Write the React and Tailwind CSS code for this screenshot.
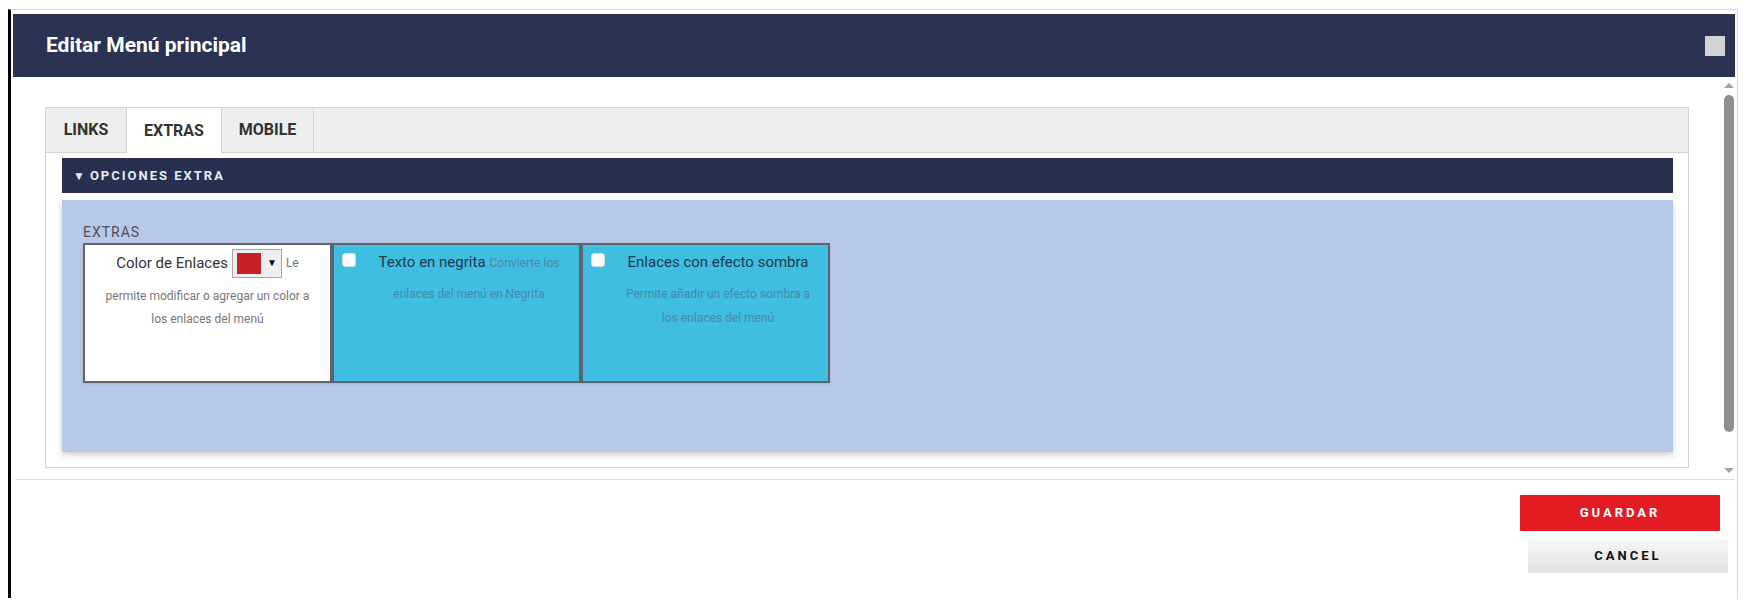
import React from 'react';

function Checkbox() {
    return (
        <input
            type="checkbox"
            className="appearance-none m-0 block w-[14px] h-[14px] rounded-[3px] bg-white border border-[#cfdde3]"
        />
    );
}

function ColorCard() {
    return (
        <div className="w-[249px] h-[140px] border-2 border-[#60646f] bg-white text-center shadow-sm">
            <div className="leading-[36px] h-[36px] flex items-center justify-center">
                <span className="text-[15px] text-[#333]">Color de Enlaces</span>
                <span className="ml-[4px] inline-flex items-center w-[50px] h-[29px] bg-[#efefef] border border-[#a5a5a5] pl-[4px]">
                    <span className="block w-[24px] h-[21px] bg-[#c62127]"></span>
                    <span className="ml-[6px] text-[10px] leading-none text-black">▼</span>
                </span>
                <span className="ml-[4px] text-[12px] text-[#777]">Le</span>
            </div>
            <div className="mt-[4px] text-[12px] leading-[23px] text-[#777]">
                <div>permite modificar o agregar un color a</div>
                <div>los enlaces del menú</div>
            </div>
        </div>
    );
}

function CheckCard({ title, firstDesc, lines }) {
    return (
        <div className="w-[249px] h-[140px] border-2 border-[#60646f] bg-[#3fbee1] flex shadow-sm">
            <div className="w-[26px] shrink-0 pl-[8px] pt-[8px]">
                <Checkbox />
            </div>
            <div className="flex-1 text-center pr-[1px]">
                <div className="h-[34px] leading-[34px] whitespace-nowrap">
                    <span className="text-[15px] text-[#1b3a4e]">{title}</span>
                    {firstDesc && <span className="ml-[4px] text-[12px] text-[#4a88ac]">{firstDesc}</span>}
                </div>
                <div className="mt-[3px] text-[12px] leading-[24px] text-[#4a88ac]">
                    {lines.map((line, index) => (
                        <div key={index}>{line}</div>
                    ))}
                </div>
            </div>
        </div>
    );
}

function Scrollbar() {
    return (
        <div className="w-[17px] shrink-0 flex flex-col items-center pt-[6px] pb-[6px]">
            <svg width="10" height="5" viewBox="0 0 10 5">
                <polygon points="5,0 10,5 0,5" fill="#a3a3a3" />
            </svg>
            <div className="mt-[7px] w-[10px] h-[337px] rounded-full bg-[#8f8f8f]"></div>
            <svg className="mt-auto" width="10" height="5" viewBox="0 0 10 5">
                <polygon points="0,0 10,0 5,5" fill="#a3a3a3" />
            </svg>
        </div>
    );
}

export default function App() {
    const tabs = [
        { name: 'LINKS', width: 'w-[81px]', active: false },
        { name: 'EXTRAS', width: 'w-[95px]', active: true },
        { name: 'MOBILE', width: 'w-[92px]', active: false },
    ];

    return (
        <div className="w-[1749px] h-[612px] bg-white pt-[9px] pl-[8px] font-['Roboto',sans-serif]">
            <div className="w-[1730px] h-[589px] border-t border-r border-[#d9d9d9] border-l-[3px] border-l-black flex flex-col">
                <div className="mt-[4px] mx-[2px] h-[63px] shrink-0 bg-[#2b3352] flex items-center justify-between pl-[33px] pr-[10px]">
                    <h1 className="text-[21px] font-bold text-white">Editar Menú principal</h1>
                    <div className="w-[20px] h-[20px] bg-[#d3d3d6]"></div>
                </div>

                <div className="flex h-[402px] shrink-0">
                    <div className="flex-1 pl-[34px] pt-[30px]">
                        <div className="w-[1644px] h-[361px] border border-[#d4d4d4] flex flex-col">
                            <div className="flex h-[45px] shrink-0 bg-[#eeeeee] border-b border-[#d4d4d4]">
                                {tabs.map((tab) => (
                                    <div
                                        key={tab.name}
                                        className={
                                            tab.active
                                                ? `${tab.width} h-[45px] bg-white border-r border-[#d4d4d4] flex items-center justify-center text-[16px] font-bold text-[#333]`
                                                : `${tab.width} h-[44px] border-r border-[#d4d4d4] flex items-center justify-center text-[16px] font-bold text-[#333]`
                                        }
                                    >
                                        {tab.name}
                                    </div>
                                ))}
                            </div>

                            <div className="pl-[16px] pr-[15px] pt-[5px]">
                                <div className="h-[35px] bg-[#27314f] flex items-center pl-[11px] text-[13px] font-bold tracking-[2px] text-[#e9ebf2]">
                                    <span className="text-[12px] tracking-normal mr-[5px]">▼</span>
                                    OPCIONES EXTRA
                                </div>

                                <div className="mt-[7px] h-[252px] bg-[#b8c9e7] shadow-[0_3px_6px_rgba(0,0,0,0.2)] pl-[21px] pt-[24px]">
                                    <div className="text-[14px] leading-[16px] tracking-[1px] text-[#4a5060]">EXTRAS</div>
                                    <div className="mt-[3px] flex">
                                        <ColorCard />
                                        <CheckCard
                                            title="Texto en negrita"
                                            firstDesc="Convierte los"
                                            lines={['enlaces del menú en Negrita']}
                                        />
                                        <CheckCard
                                            title="Enlaces con efecto sombra"
                                            lines={['Permite añadir un efecto sombra a', 'los enlaces del menú']}
                                        />
                                    </div>
                                </div>
                            </div>
                        </div>
                    </div>
                    <Scrollbar />
                </div>

                <div className="flex-1 ml-[4px] mr-[2px] border-t border-[#dedede] flex flex-col items-end pt-[15px]">
                    <button className="mr-[15px] w-[200px] h-[36px] bg-[#e31b23] text-white text-[13px] font-bold tracking-[3px] rounded-[1px]">
                        GUARDAR
                    </button>
                    <button className="mr-[7px] mt-[8px] w-[200px] h-[34px] bg-gradient-to-b from-[#f7f7f7] to-[#e2e2e2] text-[#111] text-[13px] font-bold tracking-[3px]">
                        CANCEL
                    </button>
                </div>
            </div>
        </div>
    );
}
